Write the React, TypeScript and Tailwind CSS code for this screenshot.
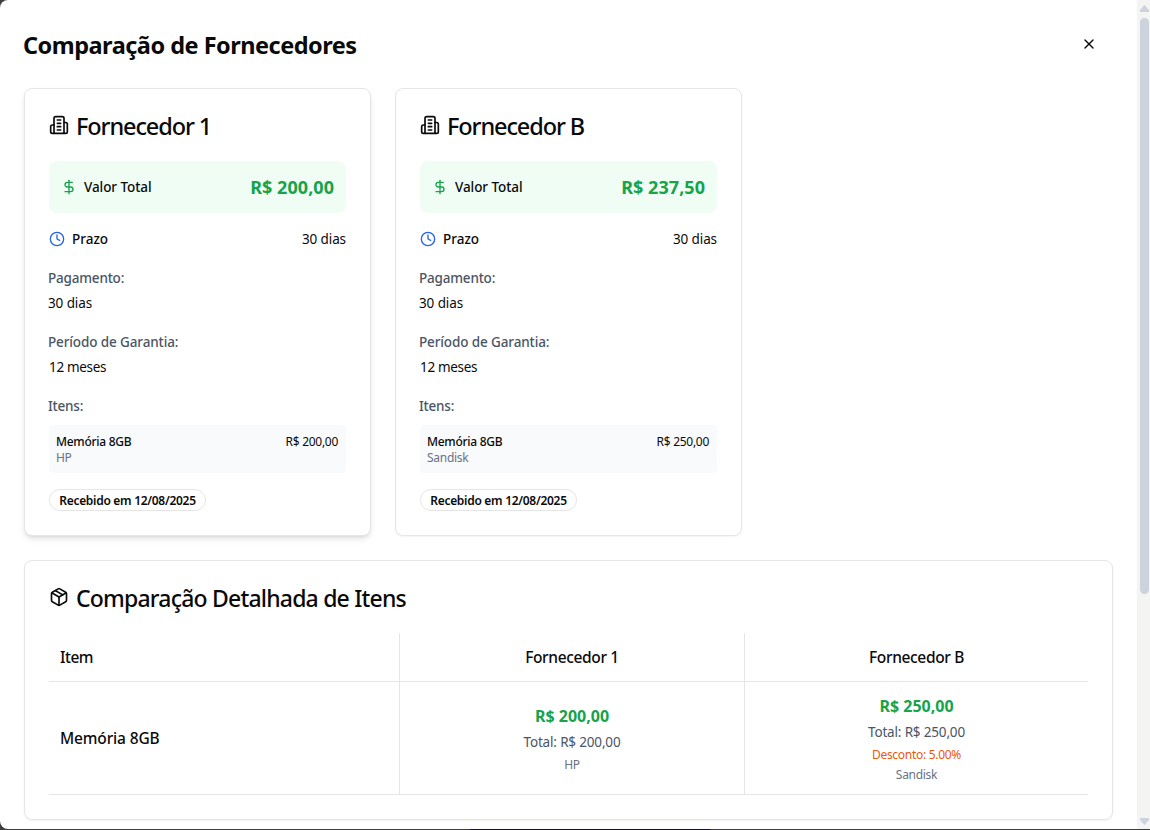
import type { ReactNode } from "react";
import { Clock, DollarSign, Package, X } from "lucide-react";

type Supplier = {
  name: string;
  total: string;
  unit: string;
  brand: string;
  discount?: string;
  raised?: boolean;
};

const suppliers: Supplier[] = [
  { name: "Fornecedor 1", total: "R$ 200,00", unit: "R$ 200,00", brand: "HP", raised: true },
  { name: "Fornecedor B", total: "R$ 237,50", unit: "R$ 250,00", brand: "Sandisk", discount: "5.00%" },
];

function BuildingIcon() {
  return (
    <svg
      className="size-5 shrink-0"
      viewBox="0 0 24 24"
      fill="none"
      stroke="currentColor"
      strokeWidth="2"
      strokeLinecap="round"
      strokeLinejoin="round"
    >
      <path d="M6 22V4a2 2 0 0 1 2-2h8a2 2 0 0 1 2 2v18Z" />
      <path d="M6 12H4a2 2 0 0 0-2 2v6a2 2 0 0 0 2 2h2" />
      <path d="M18 9h2a2 2 0 0 1 2 2v9a2 2 0 0 1-2 2h-2" />
      <path d="M10 6h4" />
      <path d="M10 10h4" />
      <path d="M10 14h4" />
      <path d="M10 18h4" />
    </svg>
  );
}

function Label({ children }: { children: ReactNode }) {
  return <div className="-ml-px h-6 pt-0.5 text-[13.5px] leading-[23px] font-medium text-gray-600">{children}</div>;
}

function SupplierCard({ s }: { s: Supplier }) {
  return (
    <section
      className={
        "rounded-lg border border-[#e5e5e5] bg-white p-6 " +
        (s.raised ? "shadow-[0_4px_6px_-1px_rgba(0,0,0,0.1),0_2px_4px_-2px_rgba(0,0,0,0.1)]" : "shadow-[0_1px_2px_rgba(0,0,0,0.05)]")
      }
    >
      <h3 className="mb-6 flex h-6 items-center gap-[7px]">
        <BuildingIcon />
        <span className="pt-0.5 text-[23.5px] leading-6 font-medium tracking-[-1.1px]">{s.name}</span>
      </h3>
      <div className="flex flex-col gap-4">
        <div className="flex h-[52px] items-center justify-between rounded-lg bg-[#f0fdf4] p-3">
          <div className="flex items-center gap-[7px]">
            <DollarSign className="size-4 text-[#16a34a]" />
            <span className="text-[13.5px] leading-5 font-medium tracking-[-0.07px]">Valor Total</span>
          </div>
          <span className="text-lg font-bold tracking-[0.05px] text-[#16a34a]">{s.total}</span>
        </div>
        <div className="flex h-5 items-center justify-between text-[13.5px] leading-5">
          <div className="flex items-center gap-[7px]">
            <Clock className="size-4 text-[#2563eb]" />
            <span className="font-medium">Prazo</span>
          </div>
          <span className="tracking-[-0.1px]">30 dias</span>
        </div>
        <div>
          <Label><span className="tracking-[-0.2px]">Pagamento:</span></Label>
          <p className="-ml-px mt-1 text-[13.5px] leading-5 tracking-[-0.1px]">30 dias</p>
        </div>
        <div>
          <Label><span className="tracking-[-0.12px]">Período de Garantia:</span></Label>
          <p className="mt-1 text-[13.5px] leading-5 tracking-[-0.33px]">12 meses</p>
        </div>
        <div>
          <Label><span className="tracking-[-0.2px]">Itens:</span></Label>
          <div className="mt-2 flex h-12 justify-between rounded bg-[#f9fafb] px-2 pt-[9px] text-xs leading-4">
            <div className="-ml-px">
              <div className="font-medium tracking-[-0.28px]">Memória 8GB</div>
              <div className="tracking-[-0.28px] text-gray-500">{s.brand}</div>
            </div>
            <span className="tracking-[-0.28px]">{s.unit}</span>
          </div>
        </div>
        <div className="flex h-[22px] w-[157px] items-center justify-center self-start rounded-full border border-[#e5e5e5] pt-px text-xs font-semibold tracking-[-0.29px] whitespace-nowrap">
          Recebido em 12/08/2025
        </div>
      </div>
    </section>
  );
}

function ItemsTable() {
  return (
    <div className="grid grid-cols-[351px_345px_343px]">
      <div className="flex h-[49px] items-center border-r border-b border-[#e5e5e5] pt-0.5 pl-[11px] text-[15.5px] font-medium tracking-[-0.5px]">
        Item
      </div>
      {suppliers.map((s) => (
        <div
          key={s.name}
          className="flex h-[49px] items-center justify-center border-r border-b border-[#e5e5e5] pt-0.5 text-[15.5px] font-medium tracking-[-0.35px] nth-3:border-r-0"
        >
          {s.name}
        </div>
      ))}
      <div className="flex h-[113px] items-center border-r border-b border-[#e5e5e5] pt-0.5 pl-[11px] text-[15.5px] font-medium tracking-[-0.15px]">
        Memória 8GB
      </div>
      {suppliers.map((s) => (
        <div
          key={s.name}
          className="flex h-[113px] flex-col items-center justify-center gap-1 border-r border-b border-[#e5e5e5] text-xs leading-4 tracking-[-0.29px] last:border-r-0"
        >
          <div className="text-base leading-6 font-bold tracking-normal text-[#16a34a]">{s.unit}</div>
          <div className="text-[13.5px] leading-5 tracking-[-0.17px] text-gray-600">Total: {s.unit}</div>
          {s.discount && <div className="h-4 pt-px text-[#ea580c]">Desconto: {s.discount}</div>}
          <div className="h-4 pt-px text-gray-500">{s.brand}</div>
        </div>
      ))}
    </div>
  );
}

function Scrollbar() {
  return (
    <div className="flex w-[13px] shrink-0 flex-col items-center bg-[#f4f4f3] pt-[5px] pb-1 pl-[2px]">
      <svg className="h-[7px] w-[9px]" viewBox="0 0 9 7" fill="#cdd3dd"><path d="M4.5 0 9 5v2H0V5Z" /></svg>
      <div className="mt-1.5 h-[576px] w-[9px] rounded-full bg-[#cdd3dd]" />
      <svg className="mt-auto h-[7px] w-[9px]" viewBox="0 0 9 7" fill="#cdd3dd"><path d="M4.5 7 9 2V0H0v2Z" /></svg>
    </div>
  );
}

export default function App() {
  return (
    <div className="h-[830px] w-[1150px] overflow-hidden bg-[#3f3f40] font-['Noto_Sans',sans-serif] text-[#0a0a0a]">
      <div className="flex h-[829px] overflow-hidden rounded-l-lg bg-white">
        <main className="w-[1137px] pr-6 pl-6">
          <header className="flex h-[88px] items-start justify-between">
            <h2 className="-ml-px pt-[29px] text-[23.5px] leading-8 font-bold tracking-[-0.5px]">Comparação de Fornecedores</h2>
            <button className="mt-9 mr-4" aria-label="Fechar">
              <X className="size-4" />
            </button>
          </header>
          <div className="grid grid-cols-3 gap-6">
            {suppliers.map((s) => (
              <SupplierCard key={s.name} s={s} />
            ))}
          </div>
          <section className="mt-6 rounded-lg border border-[#e5e5e5] bg-white p-6 shadow-[0_1px_2px_rgba(0,0,0,0.05)]">
            <h3 className="mb-6 flex h-6 items-center gap-[7px]">
              <Package className="size-5" />
              <span className="pt-0.5 text-[23px] leading-6 font-medium tracking-[-0.8px]">Comparação Detalhada de Itens</span>
            </h3>
            <ItemsTable />
          </section>
        </main>
        <Scrollbar />
      </div>
      <div className="ml-[470px] h-px w-[240px] bg-[#1c0f33]" />
    </div>
  );
}
